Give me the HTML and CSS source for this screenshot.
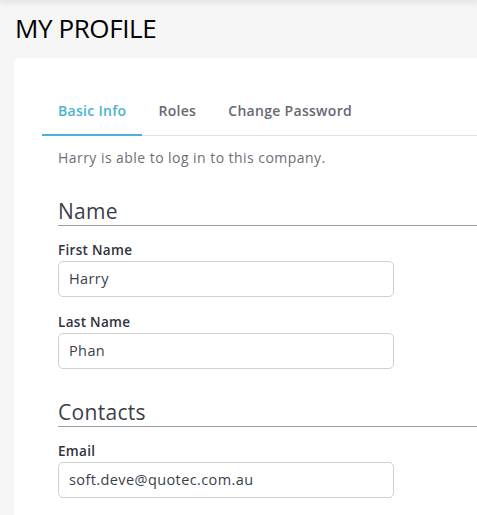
FILE: index.html
```html
<!DOCTYPE html>
<html>
<head>
<meta charset="utf-8">
<link rel="stylesheet" href="styles.css">
</head>
<body>
<div class="topshade"></div>
<h1 class="page-title">MY PROFILE</h1>
<div class="card">
  <nav class="tabs">
    <a class="tab active">Basic Info</a>
    <a class="tab">Roles</a>
    <a class="tab">Change Password</a>
    <span class="tab-fill"></span>
  </nav>
  <div class="content">
    <p class="note">Harry is able to log in to this company.</p>
    <h2 class="section">Name</h2>
    <div class="field">
      <label class="label">First Name</label>
      <div class="input">Harry</div>
    </div>
    <div class="field">
      <label class="label">Last Name</label>
      <div class="input">Phan</div>
    </div>
    <h2 class="section">Contacts</h2>
    <div class="field">
      <label class="label">Email</label>
      <div class="input">soft.deve@quotec.com.au</div>
    </div>
  </div>
</div>
</body>
</html>
```
FILE: styles.css
```css
html, body {
  margin: 0;
  padding: 0;
}
body {
  background: #f6f6f6;
  font-family: "Open Sans", "Noto Sans", sans-serif;
  overflow: hidden;
  height: 515px;
}
.topshade {
  height: 0;
  box-shadow: 0 0 6px 2px rgba(0,0,0,0.12);
}
.page-title {
  margin: 0;
  padding: 12px 0 0 15px;
  height: 58px;
  box-sizing: border-box;
  font-size: 26px;
  line-height: 32px;
  font-weight: 400;
  letter-spacing: -0.4px;
  color: #000;
}
.card {
  margin-left: 14px;
  background: #fff;
  border-radius: 6px 0 0 0;
  padding: 28px 0 0 28px;
  height: 457px;
  box-sizing: border-box;
  overflow: hidden;
}
.tabs {
  display: flex;
  height: 50px;
  align-items: stretch;
}
.tab {
  padding: 0 16px;
  font-size: 14px;
  font-weight: 600;
  letter-spacing: 0.3px;
  color: #686872;
  display: flex;
  align-items: center;
  border-bottom: 1px solid #e2e2e2;
}
.tab.active {
  color: #4ab3d2;
  border-bottom: 2px solid #4ab3d2;
}
.tab-fill {
  flex: 1;
  border-bottom: 1px solid #e2e2e2;
}
.content {
  padding-left: 16px;
}
.note {
  margin: 12px 0 0;
  font-size: 14px;
  line-height: 20px;
  letter-spacing: 0.45px;
  color: #6e6e78;
}
.section {
  margin: 29px 0 0;
  font-size: 21px;
  line-height: 28px;
  font-weight: 400;
  letter-spacing: 0.3px;
  color: #3a3f4b;
  border-bottom: 1px solid #9a9ca4;
  padding-bottom: 0;
}
.field {
  margin-top: 16px;
}
.section + .field {
  margin-top: 15px;
}
.label {
  display: block;
  font-size: 13.5px;
  line-height: 18px;
  font-weight: 600;
  letter-spacing: 0.3px;
  color: #2f3340;
  margin-bottom: 2px;
}
.input {
  width: 336px;
  height: 36px;
  box-sizing: border-box;
  border: 1px solid #d0d0d0;
  border-radius: 5px;
  padding: 0 10px;
  font-size: 14.5px;
  line-height: 34px;
  letter-spacing: 0.4px;
  color: #3a3f4b;
}
.field + .section {
  margin-top: 29px;
}
```
